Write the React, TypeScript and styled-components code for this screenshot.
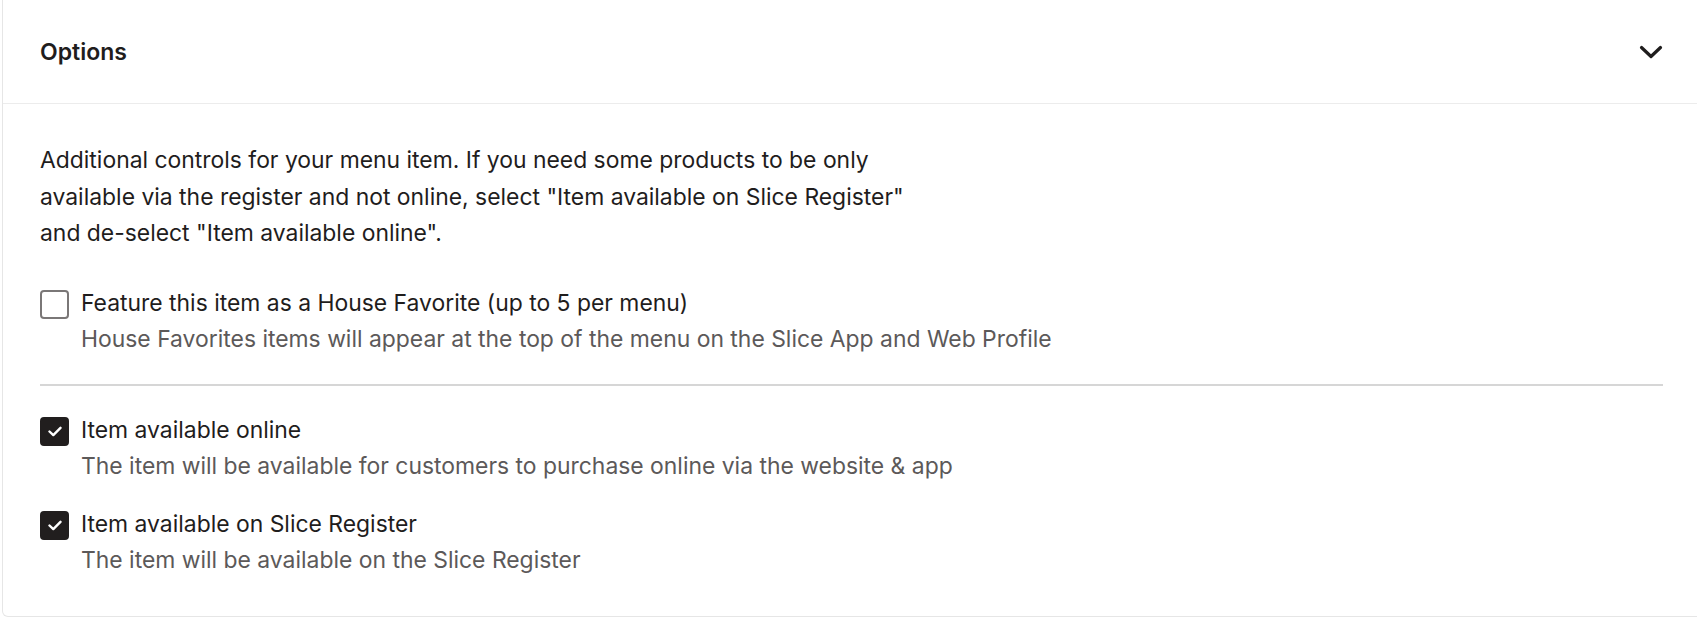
import React, { useState } from 'react';
import styled, { createGlobalStyle } from 'styled-components';

const GlobalStyle = createGlobalStyle`
    body {
        margin: 0;
        background: #ffffff;
        font-family: Inter, "Liberation Sans", sans-serif;
        color: #1f1d1d;
        overflow: hidden;
    }
`;

const Card = styled.section`
    margin: 0 -6px 0 2px;
    background: #ffffff;
    border: 1px solid #e6e6e6;
    border-top: none;
    border-radius: 0 0 6px 6px;
`;

const Header = styled.button`
    display: flex;
    align-items: center;
    justify-content: space-between;
    width: 100%;
    height: 104px;
    padding: 0 39px 0 37px;
    background: none;
    border: none;
    border-bottom: 1px solid #ececec;
    cursor: pointer;
    font: inherit;
    color: inherit;
`;

const Title = styled.h2`
    margin: 0;
    font-size: 23px;
    font-weight: 600;
`;

const Body = styled.div`
    padding: 38px 39px 38px 37px;
`;

const Intro = styled.p`
    margin: 0 0 33px;
    font-size: 22.9px;
    line-height: 36.5px;
`;

const Option = styled.label`
    display: flex;
    gap: 12px;
    cursor: pointer;
`;

const Box = styled.span<{ $checked: boolean }>`
    flex: none;
    display: flex;
    align-items: center;
    justify-content: center;
    width: 29px;
    height: 29px;
    margin-top: 5px;
    box-sizing: border-box;
    border-radius: 4px;
    border: 2.5px solid ${p => (p.$checked ? '#211e1e' : '#7a7777')};
    background: ${p => (p.$checked ? '#211e1e' : '#ffffff')};
`;

const Texts = styled.span`
    display: flex;
    flex-direction: column;
`;

const Label = styled.span`
    font-size: 22.9px;
    line-height: 36px;
`;

const Hint = styled.span`
    font-size: 22.9px;
    line-height: 36px;
    color: #5c5959;
`;

const Divider = styled.hr`
    margin: 27px 0 26px;
    border: none;
    border-top: 2px solid #d6d6d6;
`;

const Stack = styled.div`
    display: flex;
    flex-direction: column;
    gap: 22px;
`;

const Check = () => (
    <svg width="14" height="11" viewBox="0 0 14 11" fill="none">
        <path d="M1.5 5.5l3.8 3.6L12.5 1.8" stroke="#fff" strokeWidth="2.4" strokeLinecap="round" strokeLinejoin="round" />
    </svg>
);

const Chevron = () => (
    <svg width="24" height="16" viewBox="0 0 24 16" fill="none">
        <path d="M2.5 3.5l9.5 9 9.5-9" stroke="#1f1d1d" strokeWidth="3.2" strokeLinecap="round" strokeLinejoin="round" />
    </svg>
);

interface CheckOptionProps {
    label: string;
    hint: string;
    checked: boolean;
    onToggle: () => void;
}

const CheckOption: React.FC<CheckOptionProps> = ({ label, hint, checked, onToggle }) => (
    <Option onClick={onToggle}>
        <Box $checked={checked}>{checked && <Check />}</Box>
        <Texts>
            <Label>{label}</Label>
            <Hint>{hint}</Hint>
        </Texts>
    </Option>
);

export default function App() {
    const [open, setOpen] = useState(true);
    const [favorite, setFavorite] = useState(false);
    const [online, setOnline] = useState(true);
    const [register, setRegister] = useState(true);

    return (
        <>
            <GlobalStyle />
            <Card>
                <Header type="button" onClick={() => setOpen(!open)}>
                    <Title>Options</Title>
                    <Chevron />
                </Header>
                {open && (
                    <Body>
                        <Intro>
                            Additional controls for your menu item. If you need some products to be only
                            <br />
                            available via the register and not online, select "Item available on Slice Register"
                            <br />
                            and de-select "Item available online".
                        </Intro>
                        <CheckOption
                            label="Feature this item as a House Favorite (up to 5 per menu)"
                            hint="House Favorites items will appear at the top of the menu on the Slice App and Web Profile"
                            checked={favorite}
                            onToggle={() => setFavorite(!favorite)}
                        />
                        <Divider />
                        <Stack>
                            <CheckOption
                                label="Item available online"
                                hint="The item will be available for customers to purchase online via the website & app"
                                checked={online}
                                onToggle={() => setOnline(!online)}
                            />
                            <CheckOption
                                label="Item available on Slice Register"
                                hint="The item will be available on the Slice Register"
                                checked={register}
                                onToggle={() => setRegister(!register)}
                            />
                        </Stack>
                    </Body>
                )}
            </Card>
        </>
    );
}
